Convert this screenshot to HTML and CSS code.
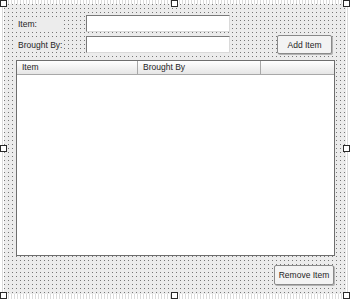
FILE: index.html
```html
<!DOCTYPE html>
<html lang="en">
<head>
    <meta charset="UTF-8">
    <title>Potluck Form - Designer</title>
    <link rel="stylesheet" href="styles.css">
</head>
<body>
    <div class="designer">
        <div class="form">
            <div class="row">
                <span class="label">Item:</span>
                <div class="textbox"></div>
            </div>
            <div class="row row-second">
                <span class="label">Brought By:</span>
                <div class="textbox"></div>
                <button class="button add-button">Add Item</button>
            </div>

            <div class="listview">
                <div class="listview-header">
                    <div class="column col-item">Item</div>
                    <div class="column col-by">Brought By</div>
                    <div class="column col-rest"></div>
                </div>
            </div>

            <div class="bottom-row">
                <button class="button remove-button">Remove Item</button>
            </div>
        </div>

        <!-- selection grab handles -->
        <span class="handle" style="left: 0; top: 0;"></span>
        <span class="handle" style="left: 171px; top: 0;"></span>
        <span class="handle" style="left: 343px; top: 0;"></span>
        <span class="handle" style="left: 0; top: 145px;"></span>
        <span class="handle" style="left: 343px; top: 145px;"></span>
        <span class="handle" style="left: 0; top: 292px;"></span>
        <span class="handle" style="left: 171px; top: 292px;"></span>
        <span class="handle" style="left: 343px; top: 292px;"></span>
    </div>
</body>
</html>
```

FILE: styles.css
```css
body {
    margin: 0;
    font-family: 'Liberation Sans', Arial, sans-serif;
    font-size: 8.5px;
    color: #1e1e1e;
    background-color: #ffffff;
}
.designer {
    position: relative;
    width: 350px;
    height: 299px;
    padding: 4px 4px 5px 4px;
    box-sizing: border-box;
    background: repeating-linear-gradient(90deg, #ffffff 0 2px, #dcdcdc 2px 3px);
}

/* form surface with the designer dot grid */
.form {
    height: 290px;
    box-sizing: border-box;
    padding-top: 10px;
    background-color: #ececec;
    background-image:
        linear-gradient(to right, #ececec 3px, transparent 3px),
        linear-gradient(to bottom, #ececec 3px, #767676 3px);
    background-size: 4px 4px;
    background-position: 1px 1px;
}

.row {
    display: flex;
    align-items: center;
    height: 19px;
    margin-left: 12px;
}
.row-second {
    margin-top: 2px;
}
.label {
    width: 45px;
    height: 14px;
    line-height: 14px;
    padding-left: 2px;
    margin-right: 25px;
    box-sizing: border-box;
    background-color: #ececec;
    white-space: nowrap;
}
.textbox {
    width: 144px;
    height: 17px;
    box-sizing: border-box;
    background-color: #ffffff;
    border: 1px solid;
    border-color: #7a7a7a #dadada #dadada #7a7a7a;
}

.button {
    font-family: inherit;
    font-size: 8.5px;
    color: #1e1e1e;
    background-color: #f3f3f3;
    border: 1px solid #8a8a8a;
    border-radius: 2px;
    box-shadow: 1px 1px 0 #b4b4b4;
    padding: 0;
}
.add-button {
    margin-left: 47px;
    width: 55px;
    height: 19px;
}

.listview {
    margin: 6px 0 0 12px;
    width: 319px;
    height: 196px;
    box-sizing: border-box;
    background-color: #ffffff;
    border: 1px solid #6e6e6e;
}
.listview-header {
    display: flex;
    height: 13px;
    background: linear-gradient(#ffffff, #e6e6e6);
    border-bottom: 1px solid #a8a8a8;
}
.column {
    height: 13px;
    line-height: 13px;
    padding-left: 5px;
    box-sizing: border-box;
    border-right: 1px solid #a8a8a8;
}
.col-item {
    width: 121px;
}
.col-by {
    width: 123px;
}
.col-rest {
    flex: 1;
    border-right: none;
}

.bottom-row {
    display: flex;
    justify-content: flex-end;
    padding-right: 12px;
    margin-top: 9px;
}
.remove-button {
    width: 60px;
    height: 20px;
}

.handle {
    position: absolute;
    width: 7px;
    height: 7px;
    box-sizing: border-box;
    background-color: #ffffff;
    border: 1px solid #2a2a2a;
}
```
